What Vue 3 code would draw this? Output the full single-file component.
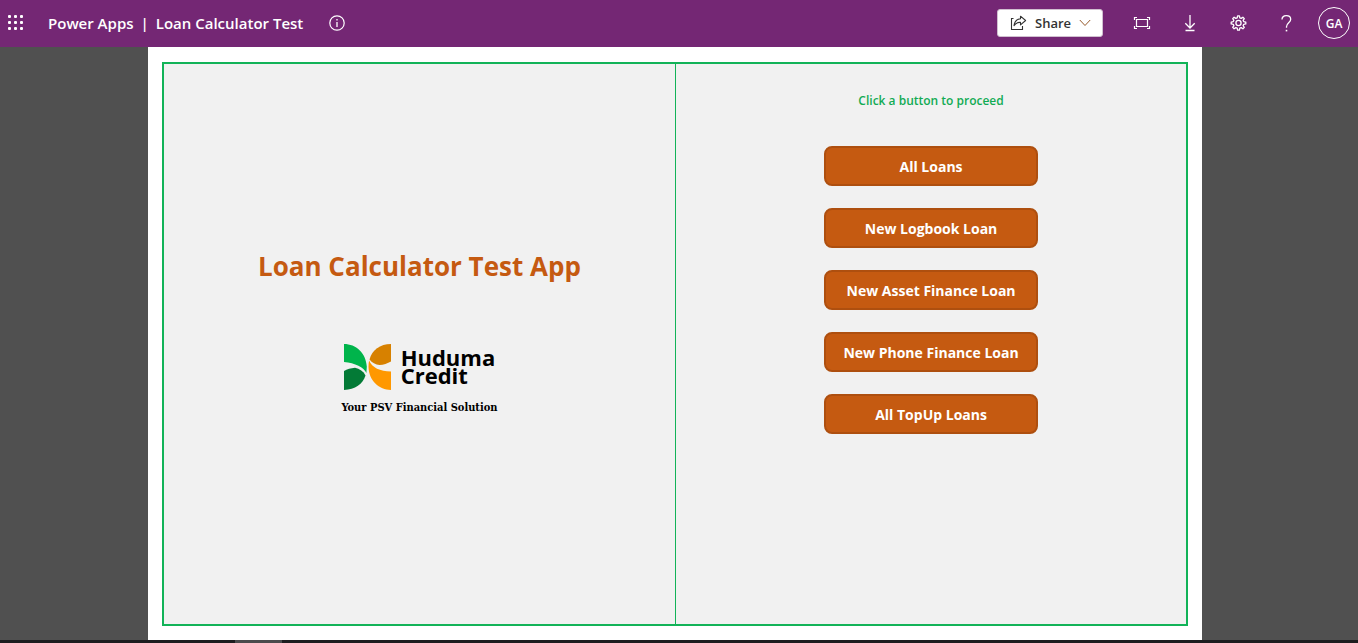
<script setup>
const actions = [
  'All Loans',
  'New Logbook Loan',
  'New Asset Finance Loan',
  'New Phone Finance Loan',
  'All TopUp Loans',
]
</script>

<template>
  <div class="page">
    <header class="topbar">
      <button class="icon-button launcher" type="button" aria-label="App launcher">
        <svg width="16" height="16" viewBox="0 0 16 16" fill="#fff">
          <template v-for="y in 3" :key="y">
            <rect v-for="x in 3" :key="x" :x="x * 6 - 6" :y="y * 6 - 6" width="3" height="3" rx="1" />
          </template>
        </svg>
      </button>
      <div class="names">
        <a class="product" href="#">Power Apps</a>
        <span class="bar">|</span>
        <span>Loan Calculator Test</span>
      </div>
      <button class="icon-button info" type="button" aria-label="App information">
        <svg width="16" height="16" viewBox="0 0 16 16" fill="none" stroke="#fff">
          <circle cx="8" cy="8" r="7.2" stroke-width="1.2" />
          <path d="M8 7v5M8 4v1.4" stroke-width="1.3" />
        </svg>
      </button>

      <div class="tools">
        <button class="share" type="button">
          <svg width="17" height="16" viewBox="0 0 17 16" fill="none" stroke="#333" stroke-width="1.1">
            <path d="M3.500 3.500h-2v11h11V11" />
            <path d="M10.500 1.200 15.600 5.500l-5.100 4.300V7.400C7.700 7.200 5.700 8.200 4 10.600 4.500 6.600 6.700 4 10.500 3.700z" stroke-linejoin="round" />
          </svg>
          <span>Share</span>
          <svg class="chevron" width="12" height="8" viewBox="0 0 12 8" fill="none" stroke="#95592a">
            <path d="M.8 1 6 6.500 11.200 1" />
          </svg>
        </button>
        <button class="icon-button" type="button" aria-label="Full screen">
          <svg width="18" height="14" viewBox="0 0 18 14" fill="none" stroke="#fff">
            <path d="M3.500 3.500h11v7h-11z" stroke-width="1.200" />
            <path d="M1.500 4V1.500H4M14 1.500h2.500V4M16.500 10v2.500H14M4 12.500H1.500V10" stroke-width="1.200" />
          </svg>
        </button>
        <button class="icon-button" type="button" aria-label="Download">
          <svg width="12" height="17" viewBox="0 0 12 17" fill="none" stroke="#fff" stroke-width="1.3">
            <path d="M6 0v13M1.300 8.300 6 13l4.700-4.700M1.500 15.500h9" />
          </svg>
        </button>
        <button class="icon-button" type="button" aria-label="Settings">
          <svg width="17" height="17" viewBox="0 0 17 17" fill="none" stroke="#fff" stroke-width="1.300" stroke-linejoin="round">
            <path d="M7.200 2.800 7.600.8h1.800l.4 2 1.400.6 1.700-1.200 1.400 1.400-1.200 1.700.6 1.300 2.100.5v1.800l-2.100.4-.6 1.400 1.200 1.700-1.400 1.400-1.700-1.200-1.400.6-.4 2H7.600l-.4-2-1.400-.6-1.700 1.200-1.400-1.400 1.200-1.700-.6-1.400-2.100-.4V7.100l2.100-.5.6-1.300-1.200-1.700 1.400-1.400 1.700 1.200z" />
            <circle cx="8.500" cy="8" r="2.600" />
          </svg>
        </button>
        <button class="icon-button" type="button" aria-label="Help">
          <svg width="11" height="17" viewBox="0 0 11 17" fill="none" stroke="#fff" stroke-width="1.300">
            <path d="M1 4.600C1 2 2.700.7 5.300.7 8 .7 9.700 2.200 9.700 4.300c0 3.400-4.200 3.700-4.200 7.500v.9" />
            <path d="M5.500 14.800v1.600" stroke-width="1.600" />
          </svg>
        </button>
        <button class="avatar" type="button" aria-label="Account GA">GA</button>
      </div>
    </header>

    <main class="stage">
      <div class="canvas">
        <div class="frame">
          <section class="intro">
            <h1>Loan Calculator Test App</h1>
            <div class="brand">
              <div class="brand-row">
                <svg width="48" height="46" viewBox="0 0 48 46" aria-hidden="true">
                  <path d="M0 0C12 0 22 9 22.800 22.500L22.400 29C20 23.500 11 19 0 18z" fill="#00b44b" />
                  <path d="M0 27c3-1.500 7-3 11-3.200 4.500 1 8.500 3.500 10.500 7.700C19 40 11 45.500 0 46z" fill="#037a36" />
                  <path d="M47 0C36 0 28 6 25.500 15.500c2.500 3.300 6 5.200 10 5.500 4-.2 8-1.500 11.500-3.500z" fill="#d78100" />
                  <path d="M47 46C35 45.500 25 37 24.500 23c0-2.500.2-4.500.6-6.500C28 23.500 36 27.500 47 27.500z" fill="#ff9800" />
                </svg>
                <div class="brand-name">
                  <span>Huduma</span>
                  <span>Credit</span>
                </div>
              </div>
              <p class="tagline">Your PSV Financial Solution</p>
            </div>
          </section>
          <section class="menu">
            <p class="hint">Click a button to proceed</p>
            <button v-for="label in actions" :key="label" class="action" type="button">{{ label }}</button>
          </section>
        </div>
      </div>
    </main>
    <div class="taskbar"><span class="task"></span></div>
  </div>
</template>

<style>
body {
  margin: 0;
}
</style>

<style scoped>
.page {
  display: flex;
  flex-direction: column;
  height: 100vh;
  background: #505050;
  font-family: "Open Sans", "Noto Sans", sans-serif;
}
button {
  font-family: inherit;
  margin: 0;
  cursor: pointer;
}
svg {
  display: block;
  flex: none;
}
.topbar {
  display: flex;
  align-items: center;
  flex: none;
  height: 47px;
  padding: 0 8px 1px 0;
  box-sizing: border-box;
  background: #742774;
  color: #fff;
}
.icon-button {
  display: flex;
  align-items: center;
  justify-content: center;
  width: 48px;
  height: 46px;
  padding: 0;
  border: 0;
  background: none;
}
.launcher {
  justify-content: flex-start;
  padding-left: 8px;
}
.names {
  display: flex;
  gap: 7px;
  font-size: 15px;
  font-weight: 600;
  line-height: 20px;
  white-space: nowrap;
}
.product {
  color: #fff;
  text-decoration: none;
}
.info {
  margin-left: 10px;
}
.tools {
  display: flex;
  align-items: center;
  margin-left: auto;
}
.share {
  display: flex;
  align-items: center;
  gap: 8px;
  height: 28px;
  width: 106px;
  margin-right: 15px;
  padding: 0 12px;
  border: 1px solid #d0c0d0;
  border-radius: 3px;
  background: #fff;
  color: #333;
  font-size: 13px;
  font-weight: 600;
}
.avatar {
  width: 32px;
  height: 32px;
  margin-left: 8px;
  padding: 0;
  border: 1px solid #fff;
  border-radius: 50%;
  background: transparent;
  color: #fff;
  font-size: 12px;
  font-weight: 600;
}
.stage {
  display: flex;
  justify-content: center;
  flex: 1;
  min-height: 0;
  padding-right: 8px;
}
.canvas {
  display: flex;
  height: 100%;
  aspect-ratio: 16 / 9;
  padding: 15px 14px 14px;
  box-sizing: border-box;
  background: #fff;
}
.frame {
  display: grid;
  grid-template-columns: 1fr 1fr;
  flex: 1;
  border: 2px solid #12b358;
  background: #f1f1f1;
}
.intro {
  display: flex;
  flex-direction: column;
  align-items: center;
  padding-top: 184px;
}
h1 {
  margin: 0;
  color: #c55a11;
  font-size: 26px;
  font-weight: 700;
  line-height: 36px;
}
.brand {
  margin-top: 60px;
  color: #000;
}
.brand-row {
  display: flex;
  justify-content: center;
  gap: 9px;
}
.brand-name {
  display: flex;
  flex-direction: column;
  padding-top: 4px;
  font-size: 22px;
  font-weight: 700;
  line-height: 18px;
}
.tagline {
  margin: 11px 0 0;
  font-family: "DejaVu Serif Condensed", "DejaVu Serif", serif;
  font-size: 11px;
  font-weight: 700;
  line-height: 14px;
  text-align: center;
  white-space: nowrap;
}
.menu {
  display: flex;
  flex-direction: column;
  align-items: center;
  gap: 22px;
  padding-top: 28px;
  border-left: 1px solid #12b358;
}
.hint {
  margin: 0 0 14px;
  color: #12ab54;
  font-size: 12px;
  font-weight: 600;
  line-height: 18px;
}
.action {
  width: 214px;
  height: 40px;
  padding: 1px 0 0;
  border: 2px solid #ae4f0f;
  border-radius: 8px;
  background: #c55a11;
  color: #fff;
  font-size: 14px;
  font-weight: 700;
}
.taskbar {
  display: flex;
  flex: none;
  height: 3px;
  background: #1d1d1f;
}
.task {
  width: 47px;
  margin-left: 235px;
  background: #4b4b4d;
}
</style>
